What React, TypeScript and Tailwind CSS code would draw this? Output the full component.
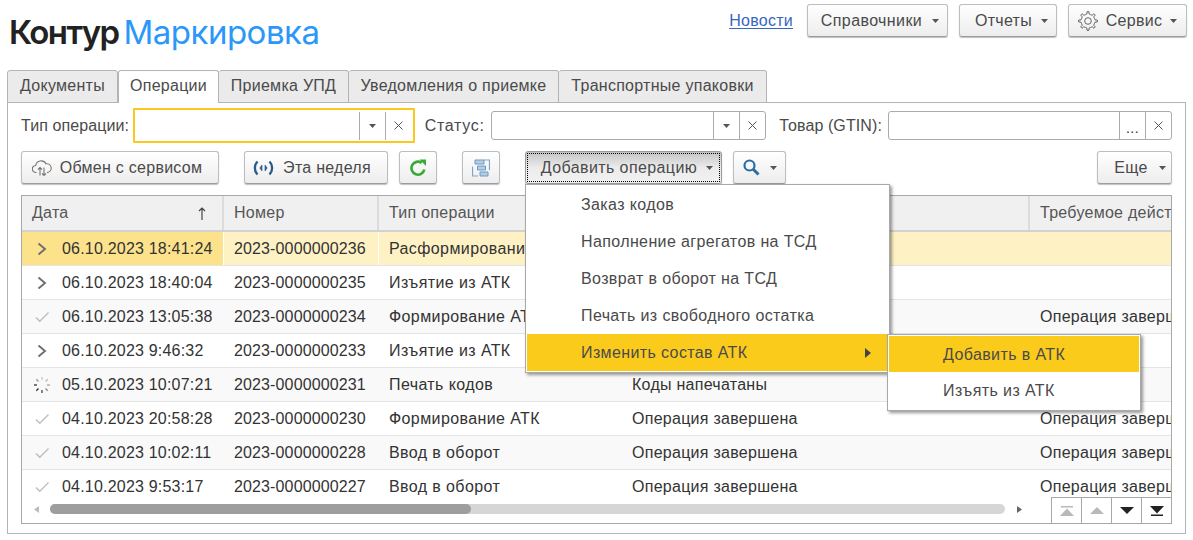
import React from "react";

const btn = "flex items-center justify-center rounded-[3px] border border-[#bdbdbd] border-b-[#9c9c9c] bg-linear-to-b from-white to-[#ededed] shadow-[0_1px_1px_rgba(0,0,0,0.25)] text-[#4a4a4a]";

function Caret({ c = "#555" }: { c?: string }) {
  return (
    <svg width="7" height="4" viewBox="0 0 7 4" className="shrink-0">
      <path d="M0 0h7L3.500 4z" fill={c} />
    </svg>
  );
}

function Chevron() {
  return (
    <svg width="12" height="14" viewBox="0 0 12 14" className="shrink-0">
      <path d="M2.500 1.500 9 7l-6.500 5.500" fill="none" stroke="#6e6e6e" strokeWidth="1.900" />
    </svg>
  );
}

function Check() {
  return (
    <svg width="14" height="12" viewBox="0 0 14 12" className="shrink-0">
      <path d="M1 6.500 4.800 10.300 13.500 1.500" fill="none" stroke="#bdbdbd" strokeWidth="1.300" />
    </svg>
  );
}

function Spinner() {
  const lines = [0, 45, 90, 135, 180, 225, 270, 315];
  const col = ["#ccc", "#bbb", "#aaa", "#888", "#555", "#333", "#444", "#999"];
  return (
    <svg width="18" height="18" viewBox="0 0 18 18" className="shrink-0">
      {lines.map((a, i) => (
        <line key={a} x1="9" y1="1" x2="9" y2="4" stroke={col[i]} strokeWidth="1.400" transform={`rotate(${a} 9 9)`} />
      ))}
    </svg>
  );
}

function Gear() {
  const teeth = 8;
  const pts: string[] = [];
  for (let i = 0; i < teeth; i++) {
    const a = (i * 2 * Math.PI) / teeth;
    const step = (2 * Math.PI) / teeth;
    [
      [a - step * 0.5, 6.9],
      [a - step * 0.2, 7.1],
      [a - step * 0.13, 9.4],
      [a + step * 0.13, 9.4],
      [a + step * 0.2, 7.1],
    ].forEach(([t, r]) => pts.push(`${(10 + r * Math.sin(t)).toFixed(2)},${(10 - r * Math.cos(t)).toFixed(2)}`));
  }
  return (
    <svg width="20" height="20" viewBox="0 0 20 20" fill="none" stroke="#666" strokeWidth="1" strokeLinejoin="round" className="shrink-0">
      <polygon points={pts.join(" ")} />
      <circle cx="10" cy="10" r="3.300" />
    </svg>
  );
}

function Combo({ w, mid }: { w: string; mid: React.ReactNode }) {
  return (
    <div className={`${w} flex h-[29px] items-stretch rounded-[3px] border border-[#ababab] bg-white`}>
      <div className="flex-1" />
      <div className="flex w-[26px] items-center justify-center border-l border-[#ababab]">{mid}</div>
      <div className="flex w-[26px] items-center justify-center border-l border-[#ababab]">
        <X />
      </div>
    </div>
  );
}

function X() {
  return (
    <svg width="9" height="9" viewBox="0 0 9 9">
      <path d="M.500.500l8 8M8.500.500l-8 8" stroke="#555" strokeWidth="1" fill="none" />
    </svg>
  );
}

type Row = { icon: "c" | "k" | "s"; d: string; n: string; t: string; s: string; a: string };
const rows: Row[] = [
  { icon: "c", d: "06.10.2023 18:41:24", n: "2023-0000000236", t: "Расформирование АТК", s: "", a: "" },
  { icon: "c", d: "06.10.2023 18:40:04", n: "2023-0000000235", t: "Изъятие из АТК", s: "", a: "" },
  { icon: "k", d: "06.10.2023 13:05:38", n: "2023-0000000234", t: "Формирование АТК", s: "", a: "Операция завершена" },
  { icon: "c", d: "06.10.2023 9:46:32", n: "2023-0000000233", t: "Изъятие из АТК", s: "", a: "" },
  { icon: "s", d: "05.10.2023 10:07:21", n: "2023-0000000231", t: "Печать кодов", s: "Коды напечатаны", a: "" },
  { icon: "k", d: "04.10.2023 20:58:28", n: "2023-0000000230", t: "Формирование АТК", s: "Операция завершена", a: "Операция завершена" },
  { icon: "k", d: "04.10.2023 10:02:11", n: "2023-0000000228", t: "Ввод в оборот", s: "Операция завершена", a: "Операция завершена" },
  { icon: "k", d: "04.10.2023 9:53:17", n: "2023-0000000227", t: "Ввод в оборот", s: "Операция завершена", a: "Операция завершена" },
];

const tabs = [
  { t: "Документы", w: "w-[111px]" },
  { t: "Операции", w: "w-[101px]", active: true },
  { t: "Приемка УПД", w: "w-[130px]" },
  { t: "Уведомления о приемке", w: "w-[210px]" },
  { t: "Транспортные упаковки", w: "w-[208px]" },
];

const menu = ["Заказ кодов", "Наполнение агрегатов на ТСД", "Возврат в оборот на ТСД", "Печать из свободного остатка"];

const cols = "grid grid-cols-[202px_155px_243px_408px_142px]";

export default function App() {
  return (
    <div className="relative h-[540px] w-[1193px] overflow-hidden bg-white text-[16px] tracking-[0.27px] text-[#4a4a4a] [font-family:'Liberation_Sans',Arial,sans-serif]">
      {/* header */}
      <div className="flex h-[70px] items-start">
        <div className="ml-[9px] mt-[12px] flex items-baseline whitespace-nowrap text-[33px] leading-[40px] tracking-normal [font-family:Inter,sans-serif]">
          <span className="font-semibold tracking-[-1.600px] text-[#222]">Контур</span>
          <span className="ml-[5px] tracking-[-0.500px] text-[#2b98f9]">Маркировка</span>
        </div>
        <div className="ml-auto mr-[6px] mt-[4px] flex items-center">
          <a className="mr-[14px] text-[#3566c2] underline underline-offset-2">Новости</a>
          <div className={`${btn} mr-[11px] h-[33px] w-[141px] gap-[10px] pl-[5px] tracking-[0.4px]`}>
            <span>Справочники</span>
            <Caret />
          </div>
          <div className={`${btn} mr-[11px] h-[33px] w-[98px] gap-[9px] pl-[7px]`}>
            <span>Отчеты</span>
            <Caret />
          </div>
          <div className={`${btn} h-[33px] w-[119px] gap-[8px]`}>
            <Gear />
            <span>Сервис</span>
            <Caret />
          </div>
        </div>
      </div>

      {/* tabs */}
      <div className="relative z-10 ml-[7px] flex h-[33px] items-start">
        {tabs.map((t) => (
          <div
            key={t.t}
            className={`${t.w} flex h-[33px] items-center justify-center rounded-t-[3px] border border-[#b4b4b4] pb-[2px] ${
              t.active ? "border-b-0 bg-white" : "border-l-0 bg-[#ebebeb] first:border-l"
            }`}
          >
            {t.t}
          </div>
        ))}
      </div>

      {/* panel */}
      <div className="mx-[7px] -mt-px h-[432px] border border-[#b4b4b4] px-[13px]">
        <div className="mt-[5px] flex h-[35px] items-center">
          <span className="w-[112px] whitespace-nowrap tracking-[0.1px]">Тип операции:</span>
          <div className="flex h-[35px] w-[282px] items-center rounded-[1px] border-[2px] border-[#fac81e] bg-white pr-[2px]">
            <div className="flex-1" />
            <div className="flex h-[28px] w-[26px] items-center justify-center border-l border-[#ababab]">
              <Caret />
            </div>
            <div className="flex h-[28px] w-[26px] items-center justify-center border-l border-[#ababab]">
              <X />
            </div>
          </div>
          <span className="ml-[10px] w-[66px] whitespace-nowrap tracking-[0.7px]">Статус:</span>
          <Combo w="w-[276px]" mid={<Caret />} />
          <span className="ml-[13px] w-[109px] whitespace-nowrap tracking-[0.1px]">Товар (GTIN):</span>
          <Combo w="w-[284px]" mid={<span className="mt-[5px] text-[14px] leading-none tracking-[0.5px] text-[#333]">...</span>} />
        </div>

        <div className="mt-[8px] flex h-[33px] items-start">
          <div className={`${btn} h-[33px] w-[198px] gap-[8px] pr-[6px]`}>
            <svg width="20" height="18" viewBox="0 0 20 18" fill="none" stroke="#777" strokeWidth="1.100" className="shrink-0">
              <path d="M4.500 13.500H4a3.500 3.500 0 0 1-.300-7A5.500 5.500 0 0 1 14 4.800 4.300 4.300 0 0 1 15.500 13.500H15" />
              <path d="M8 16.500V8.500M6 10.500l2-2 2 2" />
              <path d="M12 8.500v8M10 14.500l2 2 2-2" />
            </svg>
            <span>Обмен с сервисом</span>
          </div>
          <div className={`${btn} ml-[25px] h-[33px] w-[144px] gap-[9px] pr-[8px]`}>
            <svg width="21" height="16" viewBox="0 0 21 16" fill="none" stroke="#2c5c85" strokeWidth="2.300" className="shrink-0">
              <path d="M4.500 1.500c-3.500 3.500-3.500 9.500 0 13M16.500 1.500c3.500 3.500 3.500 9.500 0 13" />
              <path d="M9 5 6.800 8 9 11zM12 5l2.200 3L12 11z" fill="#2c5c85" strokeWidth="0.600" />
            </svg>
            <span>Эта неделя</span>
          </div>
          <div className={`${btn} ml-[11px] h-[33px] w-[38px]`}>
            <svg width="18" height="18" viewBox="0 0 18 18" fill="none" className="shrink-0">
              <path d="M15.300 10.500a6.500 6.500 0 1 1-2.600-6.600" stroke="#3aa935" strokeWidth="2.600" />
              <path d="M10.500 0.500h6.500v6.500z" fill="#3aa935" />
            </svg>
          </div>
          <div className={`${btn} ml-[25px] h-[33px] w-[38px]`}>
            <svg width="18" height="18" viewBox="0 0 18 18" fill="none" className="shrink-0">
              <path d="M.500 7.500V17h5.500M17.500 11V1H12" stroke="#7aa5cb" strokeWidth="1.200" />
              <path d="M3 1h9v4H3z" fill="#b4cde3" stroke="#6d9ac4" />
              <path d="M5.500 7h8v4h-8z" fill="#b4cde3" stroke="#6d9ac4" />
              <path d="M8 13h8v4H8z" fill="#b4cde3" stroke="#6d9ac4" />
            </svg>
          </div>
          <div className="ml-[25px] h-[33px] w-[197px] rounded-[3px] border border-[#9a9a9a] bg-linear-to-b from-[#c4c4c4] via-[#ebebeb] to-[#f2f2f2] p-[1px] shadow-[0_1px_1px_rgba(0,0,0,0.3)]">
            <div className="flex h-full items-center justify-center gap-[9px] border border-dotted border-black pl-[7px] tracking-[0.4px]">
              <span>Добавить операцию</span>
              <Caret />
            </div>
          </div>
          <div className={`${btn} ml-[11px] h-[33px] w-[53px] gap-[10px] pl-px`}>
            <svg width="17" height="17" viewBox="0 0 17 17" fill="none" className="shrink-0">
              <circle cx="6.500" cy="6.500" r="5" stroke="#2a6da5" strokeWidth="2.200" />
              <path d="M10 10l5.500 5.500" stroke="#2a6da5" strokeWidth="3" />
            </svg>
            <Caret />
          </div>
          <div className={`${btn} ml-auto h-[33px] w-[75px] gap-[11px] pl-[11px]`}>
            <span>Еще</span>
            <Caret />
          </div>
        </div>

        {/* table */}
        <div className="relative mt-[11px] h-[329px] overflow-hidden border border-[#a8a8a8] text-[#333]">
          <div className={`${cols} h-[36px] border-b-2 border-[#d2d2d2] bg-[#f0f0f0] text-[#555]`}>
            <div className="flex items-center justify-between border-r-2 border-[#dcdcdc] pl-[10px] pr-[16px]">
              <span>Дата</span>
              <svg width="8" height="13" viewBox="0 0 8 13" fill="none" stroke="#444" strokeWidth="1.200">
                <path d="M4 13V1M1 4l3-3 3 3" />
              </svg>
            </div>
            <div className="flex items-center border-r-2 border-[#dcdcdc] pl-[10px]">Номер</div>
            <div className="flex items-center border-r-2 border-[#dcdcdc] pl-[10px]">Тип операции</div>
            <div className="flex items-center border-r-2 border-[#dcdcdc] pl-[10px]">Статус</div>
            <div className="flex items-center overflow-hidden whitespace-nowrap pl-[10px]">Требуемое действие</div>
          </div>
          {rows.map((r, i) => (
            <div
              key={r.n}
              className={`${cols} h-[34px] border-b border-[#e4e4e4] ${
                i === 0 ? "bg-[#fef2c5]" : i % 2 === 0 ? "bg-[#f9f9f9]" : "bg-white"
              }`}
            >
              <div className={`flex items-center whitespace-nowrap tracking-[0.2px] ${i === 0 ? "border-r border-white bg-[#fde28c]" : ""}`}>
                <span className="flex w-[40px] items-center justify-center">
                  {r.icon === "c" ? <Chevron /> : r.icon === "k" ? <Check /> : <Spinner />}
                </span>
                {r.d}
              </div>
              <div className={`flex items-center whitespace-nowrap pl-[10px] tracking-[0.13px] ${i === 0 ? "border-r border-white" : ""}`}>{r.n}</div>
              <div className="flex items-center whitespace-nowrap pl-[10px] tracking-[0.4px]">{r.t}</div>
              <div className="flex items-center whitespace-nowrap pl-[10px]">{r.s}</div>
              <div className="flex items-center overflow-hidden whitespace-nowrap pl-[10px]">{r.a}</div>
            </div>
          ))}

          {/* scrollbar */}
          <div className="absolute bottom-0 left-0 right-0 flex h-[25px] items-start bg-white pt-[6px]">
            <div className="flex h-[10px] w-[28px] items-center justify-center">
              <svg width="5" height="7" viewBox="0 0 5 7"><path d="M5 0v7L0 3.500z" fill="#bbb" /></svg>
            </div>
            <div className="h-[10px] w-[955px] rounded-full bg-[#d6d6d6]">
              <div className="h-full w-[421px] rounded-full bg-[#9e9e9e]" />
            </div>
            <div className="flex h-[10px] w-[28px] items-center justify-center">
              <svg width="5" height="7" viewBox="0 0 5 7"><path d="M0 0v7l5-3.500z" fill="#666" /></svg>
            </div>
          </div>

          {/* pager */}
          <div className="absolute bottom-0 right-0 flex h-[26px] border-l border-t border-[#a8a8a8] bg-white">
            {[
              <svg key="a" width="14" height="10" viewBox="0 0 14 10"><path d="M1 0h12v1.500H1zM7 2.500l7 7.500H0z" fill="#b9b9b9" /></svg>,
              <svg key="b" width="14" height="7" viewBox="0 0 14 7"><path d="M7 0l7 7H0z" fill="#b9b9b9" /></svg>,
              <svg key="c" width="14" height="7" viewBox="0 0 14 7"><path d="M0 0h14L7 7z" fill="#222" /></svg>,
              <svg key="d" width="14" height="10" viewBox="0 0 14 10"><path d="M0 0h14L7 7.500zM1 8.500h12V10H1z" fill="#222" /></svg>,
            ].map((ic, i) => (
              <div key={i} className={`flex h-full items-center justify-center ${i < 3 ? "w-[30px] border-r border-[#a8a8a8]" : "w-[29px]"}`}>
                {ic}
              </div>
            ))}
          </div>
        </div>
      </div>

      {/* dropdown menu */}
      <div className="absolute left-[525px] top-[184px] z-20 w-[365px] border border-[#a8a8a8] bg-white p-px tracking-[0.38px] shadow-[2px_2px_3px_rgba(0,0,0,0.4)]">
        {menu.map((m) => (
          <div key={m} className="flex h-[37px] items-center pl-[54px]">{m}</div>
        ))}
        <div className="flex h-[37px] items-center bg-[#fbcb1c] pl-[54px] pr-[17px]">
          <span>Изменить состав АТК</span>
          <svg width="6" height="10" viewBox="0 0 6 10" className="ml-auto"><path d="M0 0l6 5-6 5z" fill="#444" /></svg>
        </div>
      </div>

      {/* sub menu */}
      <div className="absolute left-[887px] top-[334px] z-30 w-[254px] border border-[#a8a8a8] bg-white p-px tracking-[0.4px] shadow-[2px_2px_3px_rgba(0,0,0,0.4)]">
        <div className="flex h-[36px] items-center bg-[#fbcb1c] pl-[54px] pt-px">Добавить в АТК</div>
        <div className="flex h-[37px] items-center pl-[54px] pt-px">Изъять из АТК</div>
      </div>
    </div>
  );
}
